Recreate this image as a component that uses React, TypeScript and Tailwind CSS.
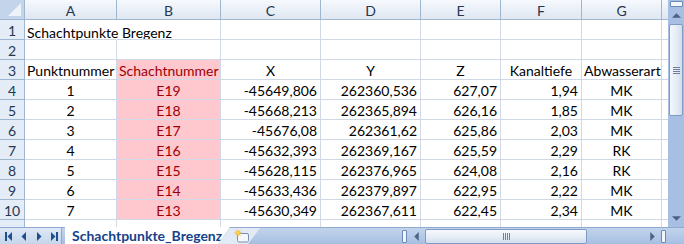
import React from 'react';

// Spaltenbreiten in px (A..G), danach angeschnittene Spalte H
const COLS = [
  { key: 'A', w: 92 },
  { key: 'B', w: 104 },
  { key: 'C', w: 100 },
  { key: 'D', w: 100 },
  { key: 'E', w: 80 },
  { key: 'F', w: 81 },
  { key: 'G', w: 80 },
];

type Align = 'left' | 'center' | 'right';

const ROWS: { cells: (string | null)[]; align: Align[] }[] = [
  { cells: ['Schachtpunkte Bregenz', null, null, null, null, null, null], align: ['left', 'left', 'left', 'left', 'left', 'left', 'left'] },
  { cells: [null, null, null, null, null, null, null], align: ['left', 'left', 'left', 'left', 'left', 'left', 'left'] },
  { cells: ['Punktnummer', 'Schachtnummer', 'X', 'Y', 'Z', 'Kanaltiefe', 'Abwasserart'], align: ['left', 'left', 'center', 'center', 'center', 'center', 'left'] },
];

const DATA = [
  ['1', 'E19', '-45649,806', '262360,536', '627,07', '1,94', 'MK'],
  ['2', 'E18', '-45668,213', '262365,894', '626,16', '1,85', 'MK'],
  ['3', 'E17', '-45676,08', '262361,62', '625,86', '2,03', 'MK'],
  ['4', 'E16', '-45632,393', '262369,167', '625,59', '2,29', 'RK'],
  ['5', 'E15', '-45628,115', '262376,965', '624,08', '2,16', 'RK'],
  ['6', 'E14', '-45633,436', '262379,897', '622,95', '2,22', 'MK'],
  ['7', 'E13', '-45630,349', '262367,611', '622,45', '2,34', 'MK'],
];

DATA.forEach((d) => ROWS.push({ cells: d, align: ['center', 'center', 'right', 'right', 'right', 'right', 'center'] }));

const alignCls: Record<Align, string> = {
  left: 'justify-start pl-[2px]',
  center: 'justify-center',
  right: 'justify-end pr-[3px]',
};

function Tri({ dir }: { dir: 'up' | 'down' | 'left' | 'right' }) {
  const pts = {
    up: '0,5 5,0 10,5',
    down: '0,0 10,0 5,5',
    left: '5,0 5,10 0,5',
    right: '0,0 0,10 5,5',
  }[dir];
  const box = dir === 'up' || dir === 'down' ? '0 0 10 5' : '0 0 5 10';
  const size = dir === 'up' || dir === 'down' ? { width: 9, height: 5 } : { width: 5, height: 9 };
  return (
    <svg viewBox={box} {...size}>
      <polygon points={pts} fill="#4d6185" />
    </svg>
  );
}

function NavBtn({ dir, bar }: { dir: 'left' | 'right'; bar?: 'l' | 'r' }) {
  return (
    <div className="flex h-full w-[15px] items-center justify-center">
      <svg width="8" height="9" viewBox="0 0 8 9">
        {bar === 'l' && <rect x="0" y="0" width="2" height="9" fill="#1f4f8f" />}
        {dir === 'left' ? (
          <polygon points={bar === 'l' ? '7,0 7,9 2.5,4.5' : '6,0 6,9 1.5,4.5'} fill="#1f4f8f" />
        ) : (
          <polygon points={bar === 'r' ? '1,0 1,9 5.5,4.5' : '2,0 2,9 6.5,4.5'} fill="#1f4f8f" />
        )}
        {bar === 'r' && <rect x="6" y="0" width="2" height="9" fill="#1f4f8f" />}
      </svg>
    </div>
  );
}

function Grip({ vertical }: { vertical?: boolean }) {
  return (
    <div className={`flex gap-[1px] ${vertical ? 'flex-col' : ''}`}>
      {[0, 1, 2, 3].map((k) => (
        <div key={k} className={`${vertical ? 'h-[1px] w-[7px]' : 'h-[7px] w-[1px]'} bg-[#6f7f99]`} />
      ))}
    </div>
  );
}

export default function App() {
  return (
    <div className="flex h-screen w-full flex-col overflow-hidden bg-white font-['Lato','Liberation_Sans',sans-serif] text-[14px] text-black">
      <div className="flex min-h-0 flex-1">
        {/* Tabellenbereich */}
        <div className="flex min-w-0 flex-1 flex-col overflow-hidden">
          {/* Spaltenköpfe */}
          <div className="flex h-[20px] shrink-0">
            <div className="relative h-[20px] w-[25px] shrink-0 border-r border-b border-[#9eb6ce] bg-[#c4d4ea]">
              <div className="absolute right-[3px] bottom-[3px] h-0 w-0 border-t-[13px] border-r-[13px] border-t-transparent border-r-[#eef3fa]" />
            </div>
            {COLS.map((c) => (
              <div
                key={c.key}
                style={{ width: c.w }}
                className="flex h-[20px] shrink-0 items-center justify-center border-r border-b border-[#9eb6ce] bg-[#e4ecf7] bg-[linear-gradient(to_bottom,#f6f9fd,#dfe7f2)] pt-[1px] text-[#27364f]"
              >
                {c.key}
              </div>
            ))}
            <div className="h-[20px] flex-1 border-b border-[#9eb6ce] bg-[linear-gradient(to_bottom,#f6f9fd,#dfe7f2)]" />
          </div>

          {ROWS.map((r, i) => (
            <div key={i} className="flex h-[20px] shrink-0">
              <div className="flex h-[20px] w-[25px] shrink-0 items-center justify-center border-r border-b border-[#9eb6ce] bg-[#e4ecf7] pt-[1px] text-[#27364f]">
                {i + 1}
              </div>
              {COLS.map((c, j) => {
                const red = j === 1 && i >= 2;
                const spill = i === 0 && j === 0;
                return (
                  <div
                    key={c.key}
                    style={{ width: c.w }}
                    className={`relative flex h-[20px] shrink-0 items-center border-b border-[#d0d7e5] pt-[2px] ${
                      spill ? 'border-r border-r-white' : 'border-r border-r-[#d0d7e5]'
                    } ${red ? 'bg-[#ffc7ce] text-[#9c0006]' : ''} ${alignCls[r.align[j]]}`}
                  >
                    {r.cells[j] !== null && (
                      <span className={`whitespace-nowrap ${spill ? 'absolute top-[2px] left-[2px]' : ''}`}>
                        {r.cells[j]}
                      </span>
                    )}
                  </div>
                );
              })}
              <div className="h-[20px] flex-1 border-b border-[#d0d7e5]" />
            </div>
          ))}

          {/* Zeile 11, angeschnitten */}
          <div className="flex min-h-0 flex-1">
            <div className="w-[25px] shrink-0 border-r border-[#9eb6ce] bg-[#e4ecf7]" />
            {COLS.map((c) => (
              <div key={c.key} style={{ width: c.w }} className="shrink-0 border-r border-[#d0d7e5]" />
            ))}
          </div>
        </div>

        {/* Vertikale Bildlaufleiste */}
        <div className="flex w-[16px] shrink-0 flex-col bg-[#a6bfe2]">
          <div className="mx-auto mt-[1px] h-[6px] w-[13px] rounded-[1px] border border-[#6c88b4] bg-[#f2f6fb]" />
          <div className="flex h-[17px] items-center justify-center">
            <Tri dir="up" />
          </div>
          <div className="mx-[1px] flex h-[92px] items-center justify-center rounded-[2px] border border-[#7f9bc4] bg-[#e3eaf4] bg-[linear-gradient(to_right,#f4f7fb,#e6edf6,#d3deed)]">
            <Grip vertical />
          </div>
          <div className="flex-1" />
          <div className="flex h-[17px] items-center justify-center">
            <Tri dir="down" />
          </div>
        </div>
      </div>

      {/* Registerleiste */}
      <div className="flex h-[17px] shrink-0 items-stretch border-t border-[#8eaad2] bg-[#b1c7e5] bg-[linear-gradient(to_bottom,#c2d4ec,#a6bfe2)]">
        <div className="flex h-full w-[62px] shrink-0 items-center border-r border-[#8eaad2] bg-[#d2dff0] bg-[linear-gradient(to_bottom,#dfe8f5,#c5d6ec)] pl-[1px]">
          <NavBtn dir="left" bar="l" />
          <NavBtn dir="left" />
          <NavBtn dir="right" />
          <NavBtn dir="right" bar="r" />
        </div>
        <div className="relative ml-[3px] -mt-[1px] flex h-[17px] w-[165px] shrink-0 items-center bg-white pl-[7px] [clip-path:polygon(0_0,100%_0,calc(100%-12px)_100%,0_100%)]">
          <span className="text-[14px] font-bold text-[#15428b]">Schachtpunkte_Bregenz</span>
        </div>
        <div className="relative -ml-[12px] flex h-[16px] w-[42px] shrink-0 items-center bg-[#e2eaf5] pl-[16px] [clip-path:polygon(12px_0,100%_0,calc(100%-12px)_100%,0_100%)]">
          <svg width="16" height="14" viewBox="0 0 16 14">
            <rect x="3.5" y="4.5" width="11" height="8.5" rx="1.5" fill="#f5f7fb" stroke="#7b8fae" />
            <path d="M4 0.5v7M0.5 4h7M1.6 1.6l4.8 4.8M6.4 1.6l-4.8 4.8" stroke="#f2a81d" strokeWidth="0.9" />
            <circle cx="4" cy="4" r="2" fill="#f9d04a" />
          </svg>
        </div>
        <div className="min-w-0 flex-1" />
        {/* Horizontale Bildlaufleiste */}
        <div className="flex w-[284px] shrink-0 items-center">
          <div className="ml-[2px] h-[13px] w-[5px] rounded-[1px] border border-[#6c88b4] bg-[#f2f6fb]" />
          <div className="flex w-[18px] items-center justify-center">
            <Tri dir="left" />
          </div>
          <div className="flex h-[15px] w-[162px] items-center justify-center rounded-[2px] border border-[#7f9bc4] bg-[#e3eaf4] bg-[linear-gradient(to_bottom,#f7f9fc,#e8eef7,#d3ddec)]">
            <Grip />
          </div>
          <div className="flex-1" />
          <div className="flex w-[17px] items-center justify-center">
            <Tri dir="right" />
          </div>
          <div className="h-[13px] w-[5px] rounded-[1px] border border-[#6c88b4] bg-[#f2f6fb]" />
          <div className="w-[18px]" />
        </div>
      </div>
    </div>
  );
}
